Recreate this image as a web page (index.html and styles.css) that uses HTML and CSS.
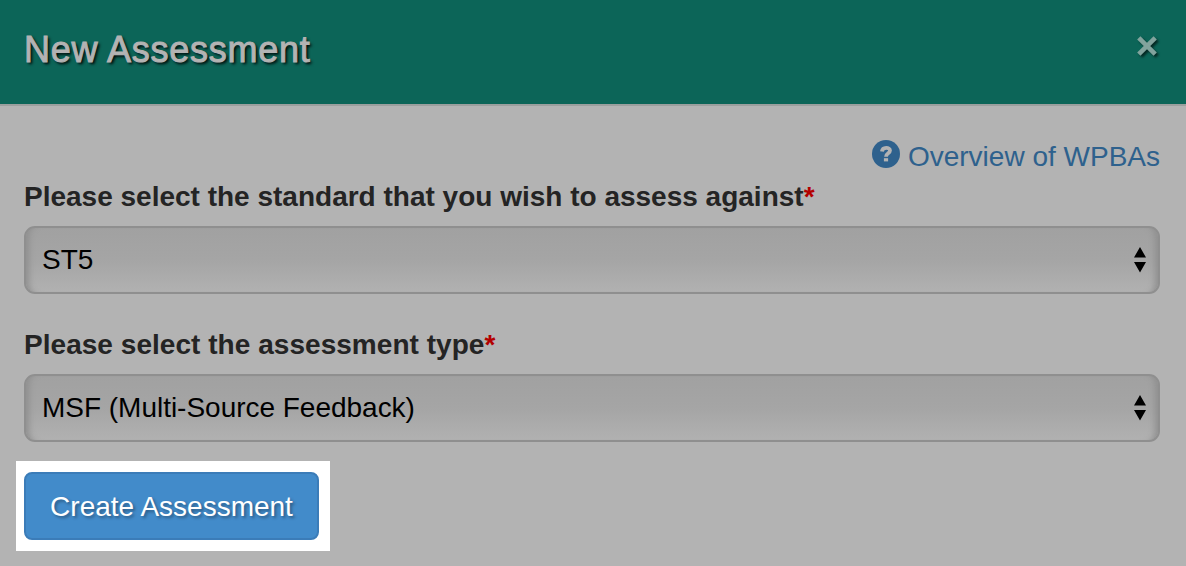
FILE: index.html
```
<!DOCTYPE html>
<html lang="en">

<head>
    <meta charset="UTF-8">
    <meta name="viewport" content="width=device-width, initial-scale=1.0">
    <title>New Assessment</title>

    <link rel="stylesheet" href="styles.css">
</head>

<body>
    <header class="modal-header">
        <h1 class="modal-title">New Assessment</h1>
        <button class="close" type="button" aria-label="Close">
            <svg width="20" height="20" viewBox="0 0 20 20">
                <path d="M1.8 1.8 L18.2 18.2 M18.2 1.8 L1.8 18.2" />
            </svg>
        </button>
    </header>

    <form class="modal-body">
        <a class="overview" href="#">
            <svg class="help-icon" width="28" height="28" viewBox="0 0 28 28">
                <circle cx="14" cy="14" r="14" />
                <path d="M9.9 11.4 C10.6 6.6 18 7 18 10.6 C18 13.4 14 13.2 14 16.8" />
                <rect x="11.9" y="18.2" width="4.2" height="3.2" />
            </svg>
            <span class="overview-text">Overview of WPBAs</span>
        </a>

        <div class="form-group">
            <label class="label-standard" for="standard">Please select the standard that you wish to assess against<span class="required">*</span></label>
            <div class="select-box">
                <select id="standard">
                    <option>ST5</option>
                </select>
                <svg class="arrows" width="12" height="26" viewBox="0 0 12 26">
                    <path d="M6 0 L12 10.5 H0 Z M0 15 H12 L6 25.5 Z" />
                </svg>
            </div>
        </div>

        <div class="form-group">
            <label class="label-type" for="type">Please select the assessment type<span class="required">*</span></label>
            <div class="select-box">
                <select class="select-type" id="type">
                    <option>MSF (Multi-Source Feedback)</option>
                </select>
                <svg class="arrows" width="12" height="26" viewBox="0 0 12 26">
                    <path d="M6 0 L12 10.5 H0 Z M0 15 H12 L6 25.5 Z" />
                </svg>
            </div>
        </div>

        <div class="highlight">
            <button class="btn-create" type="button"><span class="btn-text">Create Assessment</span></button>
        </div>
    </form>
</body>

</html>
```
FILE: styles.css
```
* {
    margin: 0;
    padding: 0;
    box-sizing: border-box;
    font-family: "Liberation Sans", Arial, sans-serif;
}

body {
    background: #b3b3b3;
    color: #242424;
    font-size: 28px;
    height: 566px;
    overflow: hidden;
}

/* Header */
.modal-header {
    height: 106px;
    padding: 0 29px 0 24px;
    display: flex;
    justify-content: space-between;
    align-items: flex-start;
    background: #0c6558;
    border-bottom: 2px solid #9b9f9e;
}

.modal-title {
    margin-top: 29px;
    font-size: 36px;
    font-weight: 400;
    line-height: 42px;
    letter-spacing: 0.75px;
    color: #b3b3b3;
    -webkit-text-stroke: 1px #b3b3b3;
    text-shadow: 2px 2px 3px #000;
}

.close {
    display: flex;
    margin-top: 36px;
    border: none;
    background: none;
    cursor: pointer;
}

.close svg {
    overflow: visible;
    fill: none;
    stroke: #82a39d;
    stroke-width: 4.6;
    filter: drop-shadow(2px 2px 1px rgba(0, 0, 0, 0.6));
}

/* Form */
.modal-body {
    padding: 34px 26px 0 24px;
}

.overview {
    display: flex;
    justify-content: flex-end;
    gap: 8px;
    height: 40px;
    color: #2e618d;
    text-decoration: none;
    line-height: 34px;
}

.help-icon {
    fill: #2e618d;
}

.help-icon path {
    fill: none;
    stroke: #b3b3b3;
    stroke-width: 3.8;
}

.help-icon rect {
    fill: #b3b3b3;
}

.form-group {
    margin-bottom: 34px;
}

label {
    display: block;
    height: 46px;
    font-weight: 700;
    line-height: 34px;
}

.label-type {
    letter-spacing: 0.04px;
}

.required {
    color: #b30000;
}

.select-box {
    position: relative;
}

select {
    display: block;
    width: 100%;
    height: 68px;
    padding: 0 16px 2px;
    appearance: none;
    border: 2px solid #8f8f8f;
    border-radius: 11px;
    background: linear-gradient(#a1a1a1, #a5a5a5 50%, #b1b1b1);
    box-shadow: inset 9px 0 6px -6px #8f8f8f, inset -9px 0 6px -6px #8f8f8f;
    color: #000;
    font-size: 28px;
    letter-spacing: -0.02px;
}

.arrows {
    position: absolute;
    top: 21px;
    right: 14px;
    pointer-events: none;
}

/* Spotlight around the submit button */
.highlight {
    display: inline-block;
    margin: -15px 0 0 -8px;
    padding: 11px 11px 11px 8px;
    background: #fff;
}

.btn-create {
    display: block;
    width: 295px;
    height: 68px;
    padding-top: 2px;
    border: 2px solid #3b7cb8;
    border-radius: 8px;
    background: #428bca;
    color: #fff;
    font-size: 28px;
    text-shadow: 2px 2px 3px rgba(0, 0, 0, 0.35);
    cursor: pointer;
}
```
